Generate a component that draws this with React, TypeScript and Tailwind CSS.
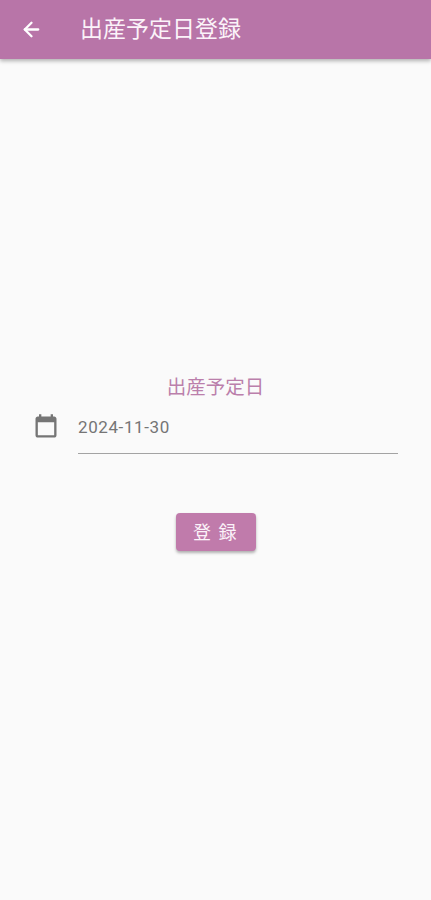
import { ArrowLeft } from 'lucide-react';

function CalendarIcon() {
  return (
    <svg viewBox="0 0 24 24" className="h-[28px] w-[28px] fill-[#757575]">
      <path d="M19 3h-1V1h-2v2H8V1H6v2H5c-1.11 0-1.99.9-1.99 2L3 19c0 1.1.89 2 2 2h14c1.1 0 2-.9 2-2V5c0-1.1-.9-2-2-2zm0 16H5V8h14v11z" />
    </svg>
  );
}

export default function App() {
  const font = { fontFamily: 'Roboto, "Noto Sans CJK JP", sans-serif' };

  return (
    <div style={font} className="flex min-h-[900px] w-full flex-col bg-[#fafafa]">
      <header className="flex h-[59px] items-center bg-[#b875a8] shadow-[0_2px_4px_rgba(0,0,0,0.3)]">
        <div className="flex w-[80px] pl-[20px]">
          <ArrowLeft className="h-[23px] w-[23px] text-white" strokeWidth={2.4} />
        </div>
        <h1 className="text-[23px] leading-none text-[#fbf3f9]">出産予定日登録</h1>
      </header>

      <main className="flex flex-col items-center pt-[317px]">
        <p className="text-[19.5px] leading-[24px] text-[#bb7fab]">出産予定日</p>

        <div className="mt-[2px] flex w-full pl-[32px] pr-[33px]">
          <div className="w-[46px] pt-[11px]">
            <CalendarIcon />
          </div>
          <div className="flex h-[52px] flex-1 items-center border-b border-[#a3a3a3] text-[17px] tracking-[0.035em] text-[#757575]">
            2024-11-30
          </div>
        </div>

        <button
          type="button"
          className="mt-[59px] h-[38px] w-[80px] rounded-[4px] bg-[#c07bab] text-[18px] tracking-[1.5px] text-[#fbf3f9] shadow-[0_2px_3px_rgba(0,0,0,0.3)]"
        >
          登 録
        </button>
      </main>
    </div>
  );
}
